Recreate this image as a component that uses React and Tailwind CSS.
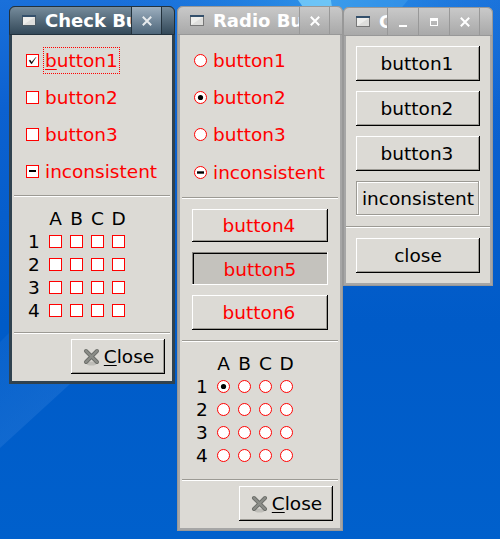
import clsx from 'clsx';

const COLS = ['A', 'B', 'C', 'D'];
const ROWS = [1, 2, 3, 4];

const RAISED = 'bg-[#dcdad5] shadow-[inset_-1px_-1px_0_#000,inset_1px_1px_0_#fff,inset_-2px_-2px_0_#9c9a94]';
const PRESSED = 'bg-[#c4c2bd] shadow-[inset_-1px_-1px_0_#fff,inset_1px_1px_0_#868480,inset_2px_2px_0_#000]';
const ETCHED = 'bg-[#dcdad5] shadow-[inset_-1px_-1px_0_#fff,inset_1px_1px_0_#9c9a94,inset_-2px_-2px_0_#9c9a94,inset_2px_2px_0_#fff]';

export default function App() {
  return (
    <div className="relative w-[500px] h-[539px] overflow-hidden text-[18.5px] leading-[23px] text-black font-['DejaVu_Sans',sans-serif]">
      <Wallpaper />

      <Window title="Check Buttons" active className="left-[9px] top-[6px] w-[166px] h-[378px]">
        <div className="pt-[7px] text-[#ff0000]">
          <CheckRow state="on" focused><Mnemonic text="button1" /></CheckRow>
          <CheckRow>button2</CheckRow>
          <CheckRow>button3</CheckRow>
          <CheckRow state="mixed">inconsistent</CheckRow>
        </div>
        <Separator className="mt-[5px] mx-[2px]" />
        <Matrix className="mt-[10px]" renderCell={() => <Check />} />
        <Separator className="mt-[10px] mx-[2px]" />
        <CloseButton />
      </Window>

      <Window title="Radio Buttons" className="left-[177px] top-[6px] w-[166px] h-[525px]">
        <div className="pt-[7px] text-[#ff0000]">
          <RadioRow>button1</RadioRow>
          <RadioRow state="on">button2</RadioRow>
          <RadioRow>button3</RadioRow>
          <RadioRow state="mixed" tall>inconsistent</RadioRow>
        </div>
        <Separator className="mt-[5px] mx-[2px]" />
        <div className="flex flex-col gap-[10px] pt-[10px] px-3 text-[#ff0000]">
          <Button className="h-[33px] pr-[2px]">button4</Button>
          <Button className="h-[33px] pt-[1px]" look={PRESSED}>button5</Button>
          <Button className="h-[35px] pr-[2px]">button6</Button>
        </div>
        <Separator className="mt-[10px] mx-[2px]" />
        <Matrix
          className="mt-[10px]"
          renderCell={(row, col) => <Radio state={row === 1 && col === 'A' ? 'on' : 'off'} />}
        />
        <Separator className="mt-[12px] mx-[2px]" />
        <CloseButton />
      </Window>

      <Window title="GTK" controls className="left-[343px] top-[7px] w-[150px] h-[279px]">
        <div className="flex flex-col gap-[10px] p-[10px]">
          <Button className="h-[35px] pr-[2px]">button1</Button>
          <Button className="h-[35px] pr-[2px]">button2</Button>
          <Button className="h-[35px] pr-[2px]">button3</Button>
          <Button className="h-[35px]" look={ETCHED}>inconsistent</Button>
        </div>
        <Separator />
        <div className="flex flex-col p-[10px]">
          <Button className="h-[35px]">close</Button>
        </div>
      </Window>
    </div>
  );
}

function Window({ title, active, controls, className, children }) {
  const frame = active ? 'bg-[#30424f]' : 'bg-[#a6a6a6] shadow-[inset_0_0_0_1px_#989898]';
  const bar = active
    ? 'border-[#22313c] bg-linear-to-b from-[#768c9c] to-[#344959]'
    : 'border-[#989898] bg-linear-to-b from-[#c9c9c9] to-[#a9a9a9]';

  return (
    <section className={clsx('absolute flex flex-col rounded-t-[6px]', frame, className)}>
      <header className={clsx('flex h-[29px] shrink-0 rounded-t-[6px] border pl-3', bar)}>
        <WindowIcon active={active} />
        <div className="ml-[9px] w-0 grow overflow-hidden whitespace-nowrap text-[18px] font-bold leading-[27px] text-white">
          {title}
        </div>
        {controls && (
          <>
            <TitleButton active={active}><rect x="2" y="9" width="8" height="2" fill="#fff" /></TitleButton>
            <TitleButton active={active}>
              <path d="M2 2h8v8h-8z M3 5v4h6v-4z" fill="#fff" fillRule="evenodd" />
            </TitleButton>
          </>
        )}
        <TitleButton active={active} last>
          <path d="M1.8 1.8L10.2 10.2M10.2 1.8L1.8 10.2" stroke={active ? '#e6eaed' : '#fff'} strokeWidth="2" />
        </TitleButton>
        <div className={clsx('w-[13px] border-l', active ? 'border-[#22313c]' : 'border-[#989898]')} />
      </header>
      <div className="mx-[3px] mb-[3px] grow bg-[#dcdad5]">{children}</div>
    </section>
  );
}

function TitleButton({ active, last, children }) {
  return (
    <button
      className={clsx(
        'flex shrink-0 items-center justify-center border-l',
        last ? 'w-[30px]' : 'w-[31px]',
        active ? 'border-[#22313c] bg-linear-to-b from-[#9dafbf] to-[#4e667a]' : 'border-[#989898]'
      )}
    >
      <svg width="12" height="12" viewBox="0 0 12 12">{children}</svg>
    </button>
  );
}

function WindowIcon({ active }) {
  return (
    <svg className="mt-[8px] shrink-0" width="14" height="11" viewBox="0 0 14 11">
      <rect width="14" height="11" fill={active ? '#4c5a64' : '#777'} />
      <rect width="14" height="2" fill="#34506c" />
      <rect x="1" y="2" width="12" height="8" fill="#eeeeec" />
      <path d="M13 2v8h-12z" fill="#dededc" />
    </svg>
  );
}

function Check({ state = 'off' }) {
  return (
    <svg className="shrink-0" width="13" height="13" viewBox="0 0 13 13">
      <rect x="0.5" y="0.5" width="12" height="12" fill="#fff" stroke="#ff0000" />
      {state === 'on' && <path d="M3 6.6L4.2 6L5.6 8.2L10 3.2L5.8 9.8H5.2z" fill="#000" stroke="#000" strokeWidth="0.3" />}
      {state === 'mixed' && <rect x="3" y="5" width="7" height="2" fill="#000" />}
    </svg>
  );
}

function Radio({ state = 'off' }) {
  return (
    <svg className="shrink-0" width="13" height="13" viewBox="0 0 13 13">
      <circle cx="6.5" cy="6.5" r="6" fill="#fff" stroke="#ff0000" />
      {state === 'on' && <circle cx="6.5" cy="6.5" r="2.6" fill="#000" />}
      {state === 'mixed' && <rect x="3" y="5.3" width="7" height="2.4" fill="#000" />}
    </svg>
  );
}

function CheckRow({ state, focused, children }) {
  return (
    <div className="flex h-[37px] items-center pl-[14px]">
      <Check state={state} />
      <span
        className={clsx(
          'ml-[4px] h-[27px] whitespace-nowrap border px-px pt-px',
          focused ? 'w-[77px] border-dotted border-[#ff0000]' : 'border-transparent'
        )}
      >
        {children}
      </span>
    </div>
  );
}

function RadioRow({ state, tall, children }) {
  return (
    <div className={clsx('flex items-center pl-[14px]', tall ? 'h-[39px]' : 'h-[37px]')}>
      <Radio state={state} />
      <span className="ml-[6px] whitespace-nowrap">{children}</span>
    </div>
  );
}

function Matrix({ className, renderCell }) {
  return (
    <div className={clsx('grid grid-cols-[21px_21px_21px_21px_21px] auto-rows-[23px] pl-[12px]', className)}>
      <span />
      {COLS.map(col => <span key={col} className="flex items-center justify-center">{col}</span>)}
      {ROWS.map(row => (
        <div key={row} className="contents">
          <span className="flex items-center justify-center pr-px">{row}</span>
          {COLS.map(col => (
            <span key={col} className="flex items-center justify-center">{renderCell(row, col)}</span>
          ))}
        </div>
      ))}
    </div>
  );
}

function Separator({ className }) {
  return <div className={clsx('h-[2px] border-t border-b border-t-[#9c9a94] border-b-white', className)} />;
}

function Button({ className, look = RAISED, children }) {
  return (
    <button className={clsx('flex items-center justify-center whitespace-nowrap', look, className)}>
      {children}
    </button>
  );
}

function CloseButton() {
  return (
    <div className="mt-[5px] mr-[7px] flex justify-end">
      <Button className="h-[35px] w-[94px]">
        <CloseIcon />
        <span className="ml-[4px]"><Mnemonic text="Close" /></span>
      </Button>
    </div>
  );
}

// First letter is the keyboard accelerator
function Mnemonic({ text }) {
  return (
    <>
      <span className="underline decoration-1 underline-offset-2">{text[0]}</span>
      {text.slice(1)}
    </>
  );
}

function CloseIcon() {
  return (
    <svg width="18" height="18" viewBox="0 0 18 18">
      <ellipse cx="9.5" cy="15.5" rx="5" ry="2" fill="#bebdb8" />
      <path d="M4 3L15 14M15 3L4 14" stroke="#6b6d69" strokeWidth="4" strokeLinecap="round" />
      <path d="M4 3L15 14M15 3L4 14" stroke="#8b8d88" strokeWidth="2.2" strokeLinecap="round" />
    </svg>
  );
}

function Wallpaper() {
  return (
    <svg className="absolute inset-0" width="500" height="539" viewBox="0 0 500 539">
      <defs>
        <linearGradient id="sky" x1="0" y1="0" x2="0" y2="1">
          <stop offset="0" stopColor="#1a70da" />
          <stop offset="0.2" stopColor="#0c61d0" />
          <stop offset="0.6" stopColor="#005bc8" />
          <stop offset="1" stopColor="#0060cc" />
        </linearGradient>
        <radialGradient id="glow" cx="330" cy="0" r="220" gradientUnits="userSpaceOnUse">
          <stop offset="0" stopColor="#3aa4f0" stopOpacity="0.7" />
          <stop offset="0.3" stopColor="#2c94ea" stopOpacity="0.55" />
          <stop offset="1" stopColor="#1a78dc" stopOpacity="0" />
        </radialGradient>
        <linearGradient id="ray" x1="30" y1="421" x2="-30" y2="355" gradientUnits="userSpaceOnUse">
          <stop offset="0" stopColor="#2a7ad8" stopOpacity="0.4" />
          <stop offset="1" stopColor="#2a7ad8" stopOpacity="0.2" />
        </linearGradient>
      </defs>
      <rect width="500" height="539" fill="url(#sky)" />
      <rect width="500" height="220" fill="url(#glow)" />
      <path d="M298 0H331L334 20H312z" fill="#8fe0ff" fillOpacity="0.65" />
      <path d="M331 0H408L390 22H334z" fill="#48a8f0" fillOpacity="0.4" />
      <path d="M0 342L12 330V384H70L0 448z" fill="url(#ray)" />
    </svg>
  );
}
